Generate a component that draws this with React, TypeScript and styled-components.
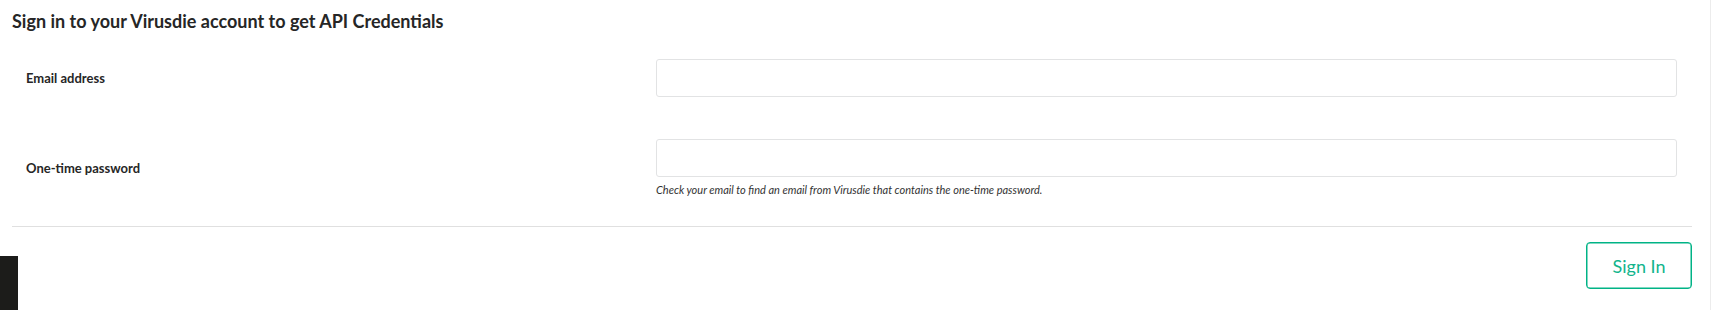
import React, { useState } from 'react';
import styled, { createGlobalStyle } from 'styled-components';

// GLOBAL STYLES
const GlobalStyle = createGlobalStyle`
  html, body {
    margin: 0;
    padding: 0;
    background: #ffffff;
  }
  body {
    font-family: Lato, 'Open Sans', 'Liberation Sans', sans-serif;
    color: #262626;
  }
`;

const App: React.FC = () => {
  const [email, setEmail] = useState<string>('');
  const [otp, setOtp] = useState<string>('');

  return (
    <>
      <GlobalStyle />
      <Page>
        <Title>Sign in to your Virusdie account to get API Credentials</Title>
        <Form onSubmit={(e) => e.preventDefault()}>
          <FormRow>
            <Label htmlFor='email'>Email address</Label>
            <Field>
              <Input
                id='email'
                type='email'
                value={email}
                onChange={(e) => setEmail(e.target.value)}
              />
            </Field>
          </FormRow>
          <FormRow last>
            <Label htmlFor='otp'>One-time password</Label>
            <Field>
              <Input
                id='otp'
                type='text'
                value={otp}
                onChange={(e) => setOtp(e.target.value)}
              />
              <Help>
                Check your email to find an email from Virusdie that contains
                the one-time password.
              </Help>
            </Field>
          </FormRow>
          <Divider />
          <Actions>
            <SignInButton type='submit'>Sign In</SignInButton>
          </Actions>
        </Form>
      </Page>
      <SideTab />
    </>
  );
};

// STYLED COMPONENTS
const Page = styled.div`
  box-sizing: border-box;
  min-height: 310px;
  padding: 10px 18px 0 12px;
  border-right: 1px solid #ececec;
`;

const Title = styled.h3`
  margin: 0;
  font-size: 18px;
  line-height: 22px;
  font-weight: 700;
  color: #262626;
`;

const Form = styled.form`
  margin-top: 27px;
`;

const FormRow = styled.div<{ last?: boolean }>`
  display: grid;
  grid-template-columns: 3fr 5fr;
  align-items: center;
  margin-bottom: ${(p) => (p.last ? '29px' : '42px')};
`;

const Label = styled.label`
  padding-left: 14px;
  font-size: 13px;
  font-weight: 700;
  color: #262626;
`;

const Field = styled.div`
  padding: 0 15px 0 14px;
`;

const Input = styled.input`
  display: block;
  box-sizing: border-box;
  width: 100%;
  height: 38px;
  padding: 6px 12px;
  border: 1px solid #e2e3e4;
  border-radius: 3px;
  font-family: inherit;
  font-size: 14px;
  outline: none;
  &:focus {
    border-color: #12b48c;
  }
`;

const Help = styled.p`
  margin: 5px 0 0;
  font-size: 11px;
  line-height: 15px;
  font-style: italic;
  color: #333333;
`;

const Divider = styled.hr`
  margin: 0;
  border: none;
  border-top: 1px solid #e0e0e0;
`;

const Actions = styled.div`
  display: flex;
  justify-content: flex-end;
  padding-top: 15px;
`;

const SignInButton = styled.button`
  box-sizing: border-box;
  width: 106px;
  height: 47px;
  padding: 0;
  background: #ffffff;
  color: #12b48c;
  border: 1px solid #00b386;
  box-shadow: inset 0 0 0 0.5px #00b386;
  border-radius: 4px;
  font-family: inherit;
  font-size: 18px;
  cursor: pointer;
  &:hover {
    background: #12b48c;
    color: #ffffff;
  }
`;

const SideTab = styled.div`
  position: fixed;
  left: 0;
  top: 256px;
  width: 18px;
  height: 54px;
  background: #1c1c1a;
`;

export default App;
